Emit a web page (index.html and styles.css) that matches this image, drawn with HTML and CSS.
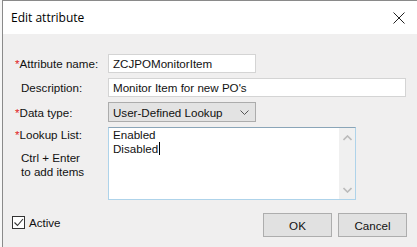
FILE: index.html
```html
<!DOCTYPE html>
<html>
<head>
<meta charset="utf-8">
<link rel="stylesheet" href="styles.css">
</head>
<body>
<div class="window">
  <div class="titlebar">
    <span class="title">Edit attribute</span>
    <svg class="close" width="12" height="12" viewBox="0 0 12 12"><path d="M0.5 0.5 L11.5 11.5 M11.5 0.5 L0.5 11.5" stroke="#222" stroke-width="1" fill="none"/></svg>
  </div>
  <div class="body">
    <div class="form">
      <label class="lbl"><span class="req">*</span>Attribute name:</label>
      <div class="field"><div class="input short">ZCJPOMonitorItem</div></div>

      <label class="lbl ind">Description:</label>
      <div class="field"><div class="input long">Monitor Item for new PO's</div></div>

      <label class="lbl"><span class="req">*</span>Data type:</label>
      <div class="field">
        <div class="select">
          <span>User-Defined Lookup</span>
          <svg width="9" height="5" viewBox="0 0 9 5"><path d="M0.5 0.5 L4.5 4.5 L8.5 0.5" stroke="#555" stroke-width="1" fill="none"/></svg>
        </div>
      </div>

      <div class="lbl stack">
        <div><span class="req">*</span>Lookup List:</div>
        <div class="hint">Ctrl + Enter<br>to add items</div>
      </div>
      <div class="field">
        <div class="textarea">
          <div class="ta-text">Enabled<br>Disabled<span class="caret"></span></div>
          <div class="scroll">
            <svg width="9" height="6" viewBox="0 0 9 6"><path d="M0.5 5 L4.5 1 L8.5 5" stroke="#bbb" stroke-width="1.6" fill="none"/></svg>
            <svg width="9" height="6" viewBox="0 0 9 6"><path d="M0.5 1 L4.5 5 L8.5 1" stroke="#bbb" stroke-width="1.6" fill="none"/></svg>
          </div>
        </div>
      </div>
    </div>
    <div class="footer">
      <label class="check">
        <span class="box"><svg width="11" height="11" viewBox="0 0 11 11"><path d="M1.5 5.5 L4.5 8.5 L10 2" stroke="#333" stroke-width="1.1" fill="none"/></svg></span>
        <span>Active</span>
      </label>
      <div class="buttons">
        <div class="btn ok">OK</div>
        <div class="btn cancel">Cancel</div>
      </div>
    </div>
  </div>
</div>
</body>
</html>
```

FILE: styles.css
```css
* { box-sizing: border-box; }
html, body { margin: 0; padding: 0; }
body {
  background: #f7f7f7;
  width: 417px;
  height: 247px;
  overflow: hidden;
  font-family: "Liberation Sans", Arial, sans-serif;
  font-size: 11.6px;
  color: #111;
}
.window {
  margin-left: 2px;
  border-left: 1px solid #8a8a8a;
  border-top: 1px solid #8a8a8a;
  background: #f0efef;
  height: 247px;
}
.titlebar {
  height: 33px;
  background: #fff;
  display: flex;
  align-items: center;
  justify-content: space-between;
  padding-left: 8px;
  padding-right: 12px;
}
.title {
  font-family: "Open Sans", "Noto Sans", sans-serif;
  font-size: 12px;
  color: #000;
  margin-top: -1px;
}
.close { display: block; }
.body {
  padding: 20px 0 0 12px;
}
.form {
  display: grid;
  grid-template-columns: 93px 298px;
  row-gap: 5px;
}
.lbl {
  display: flex;
  align-items: center;
  color: #111;
}
.lbl.ind { padding-left: 6px; }
.req { color: #e0231c; }
.lbl.stack {
  flex-direction: column;
  align-items: flex-start;
  justify-content: flex-start;
  padding-top: 1px;
}
.hint {
  padding-left: 6px;
  margin-top: 10px;
  line-height: 14px;
}
.input {
  height: 19px;
  background: #fff;
  border: 1px solid #d4d4d4;
  padding: 1px 4px 0;
  line-height: 16px;
  white-space: nowrap;
}
.input.short { width: 148px; }
.input.long { width: 298px; }
.select {
  width: 148px;
  height: 20px;
  background: #e3e3e3;
  border: 1px solid #acacac;
  display: flex;
  align-items: center;
  justify-content: space-between;
  padding: 0 6px 0 4px;
}
.select svg { display: block; }
.textarea {
  width: 248px;
  height: 73px;
  background: #fff;
  border: 1px solid #aed3ea;
  border-top-color: #8aa5b8;
  display: flex;
  justify-content: space-between;
}
.ta-text {
  padding: 0 4px;
  line-height: 14px;
}
.caret {
  display: inline-block;
  width: 1px;
  height: 13px;
  background: #000;
  vertical-align: -2px;
  margin-left: 1px;
}
.scroll {
  width: 16px;
  background: #f0f0f0;
  display: flex;
  flex-direction: column;
  justify-content: space-between;
  align-items: center;
  padding: 7px 0 6px;
}
.scroll svg { display: block; }
.footer {
  display: flex;
  justify-content: space-between;
  align-items: center;
  margin-top: 13px;
  margin-left: -3px;
  padding-right: 10px;
}
.check {
  display: flex;
  align-items: center;
  gap: 4px;
  margin-top: -6px;
}
.box {
  width: 13px;
  height: 13px;
  border: 1px solid #333;
  background: #fff;
  display: flex;
  align-items: center;
  justify-content: center;
}
.box svg { display: block; }
.buttons {
  display: flex;
  gap: 6px;
}
.btn {
  width: 69px;
  height: 24px;
  background: #e1e1e1;
  border: 1px solid #adadad;
  display: flex;
  align-items: center;
  justify-content: center;
}
```
